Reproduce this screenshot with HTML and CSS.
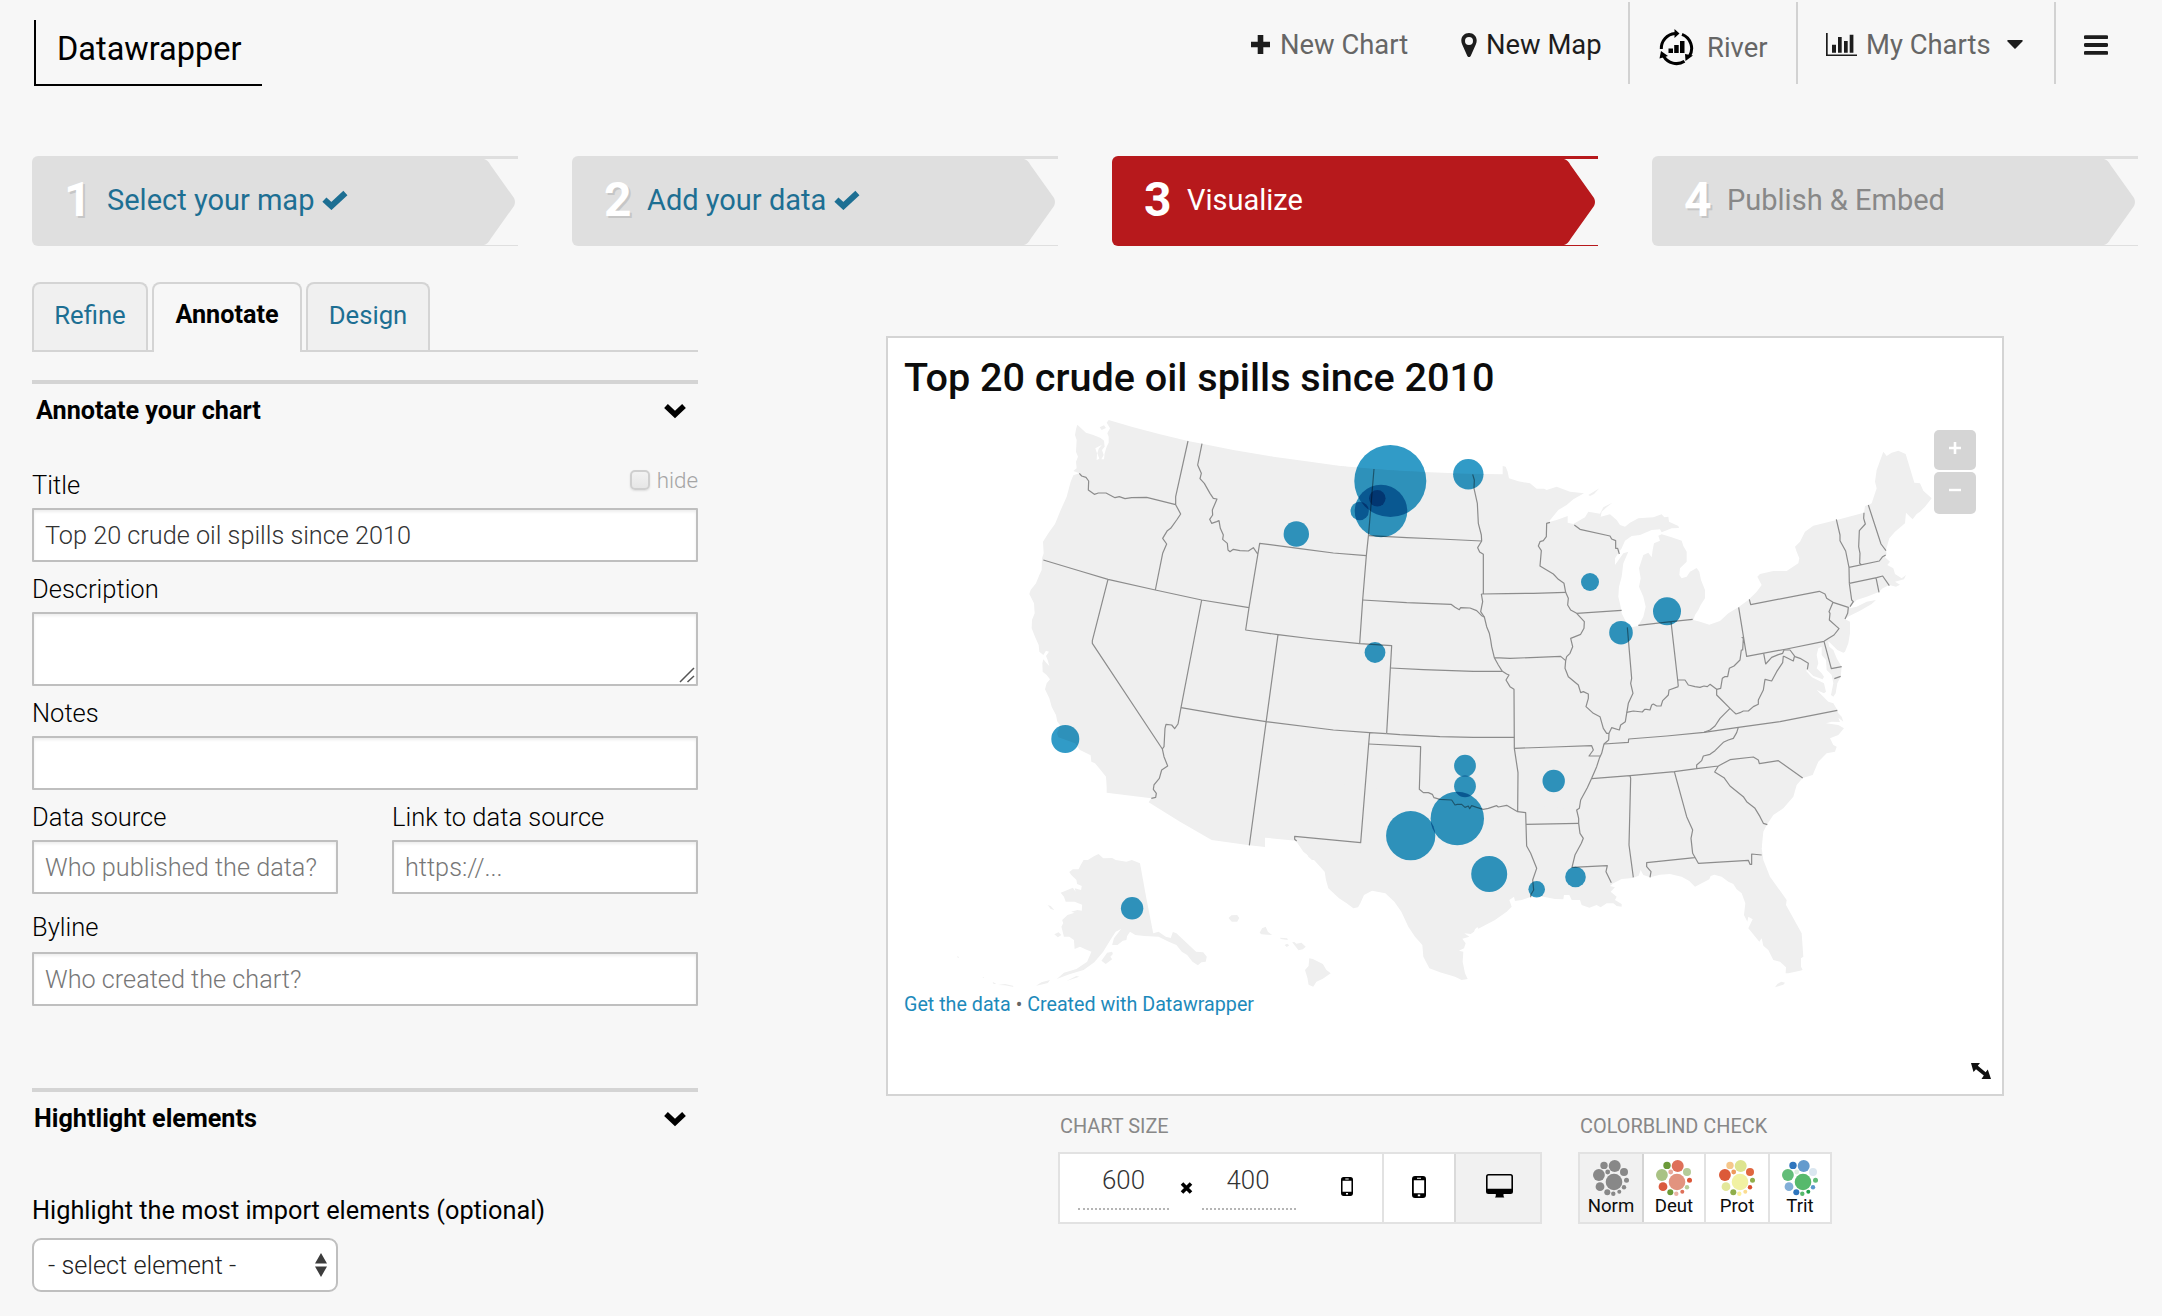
FILE: index.html
```html
<!DOCTYPE html>
<html lang="en">
<head>
<meta charset="utf-8">
<title>Datawrapper</title>
<link rel="stylesheet" href="styles.css">
</head>
<body>
<svg class="defs" aria-hidden="true">
  <symbol id="chevron" viewBox="0 0 24 16"><path d="M3 3 L12 11.5 L21 3" fill="none" stroke="#000" stroke-width="5.4"/></symbol>
  <symbol id="check" viewBox="0 0 26 20"><path d="M2.4 9.6 L9.4 16 L23.4 3" fill="none" stroke="currentColor" stroke-width="6"/></symbol>
  <symbol id="notch" viewBox="0 0 34 90"><path d="M0 3 Q4 4 6.5 9 L30 42 Q32 46 30 50 L6.5 83 Q4 88 0 89 H34 V3 Z" fill="#f7f7f7"/></symbol>
  <symbol id="dots" viewBox="0 0 36 36">
    <circle class="d1" cx="21" cy="22" r="8.3"/><circle class="d2" cx="21.7" cy="6" r="6"/><circle class="d3" cx="11" cy="5.4" r="3.7"/>
    <circle class="d4" cx="5.9" cy="15" r="5.9"/><circle class="d5" cx="14.7" cy="12" r="2.4"/><circle class="d6" cx="31" cy="12" r="4"/>
    <circle class="d7" cx="33.5" cy="20.3" r="2.5"/><circle class="d8" cx="31" cy="27.3" r="2.2"/><circle class="d9" cx="26.3" cy="31.7" r="2"/>
    <circle class="d10" cx="20.3" cy="33.7" r="2.2"/><circle class="d11" cx="14.3" cy="32.3" r="3"/><circle class="d12" cx="7" cy="26.7" r="4.4"/>
  </symbol>
</svg>

<header class="topbar">
  <a class="logo">Datawrapper</a>
  <nav class="nav">
    <a class="nav-item nav-new-chart"><svg class="icon-plus" viewBox="0 0 21 21"><path d="M10.5 1v19M1 10.5h19" stroke="#1d1d1d" stroke-width="5.6" stroke-linecap="butt"/></svg>New Chart</a>
    <a class="nav-item nav-new-map"><svg class="icon-pin" viewBox="0 0 16 24"><path fill-rule="evenodd" fill="#1d1d1d" d="M8 0C3.500 0 .3 3.300.3 7.600c0 1.500.3 2.600.9 3.900l5 11.300c.7 1.600 2.900 1.600 3.600 0l5-11.300c.6-1.300.9-2.400.9-3.900C15.700 3.300 12.500 0 8 0zM8 4a4 4 0 1 1 0 8a4 4 0 1 1 0-8z"/></svg>New Map</a>
    <a class="nav-item nav-river"><svg class="icon-river" viewBox="0 0 35 37"><g fill="none" stroke="#000" stroke-width="3"><path d="M2.300 20A15 15 0 0 1 16 4.500"/><path d="M23 5.300A15 15 0 0 1 30.500 27"/><path d="M25.500 32.300A15 15 0 0 1 4.500 27"/></g><path d="M15.500 0l5 4.500-5 4.500zM26 25l8 1.500-7.500 5.500zM.5 29.500L2 22l7 5zM9.500 19.500h4.500v4.500h-4.500zM15.200 16h4.500v8h-4.500zM21 12h4.500v12H21z"/></svg>River</a>
    <a class="nav-item nav-charts"><svg class="icon-bars" viewBox="0 0 31 24"><path fill="#1d1d1d" d="M0 0h1.700v21.500H31V23H0zM6 11.700h4v8H6zM12 4h3.700v15.700H12zM18 8h3.700v11.700H18zM23.700 1.700h3.700v18h-3.700z"/></svg>My Charts<svg class="icon-caret" viewBox="0 0 16 9"><path d="M1 0h14q1.200.4.4 1.400L8.600 8.600q-.6.500-1.200 0L.6 1.400Q-.2.400 1 0z" fill="#1d1d1d"/></svg></a>
    <a class="nav-item nav-menu"><svg class="icon-menu" viewBox="0 0 24 20"><path d="M1.500 2.200h21M1.500 10h21M1.500 17.800h21" stroke="#1d1d1d" stroke-width="3.800" stroke-linecap="round"/></svg></a>
  </nav>
</header>

<ol class="steps">
  <li class="step done"><b>1</b>Select your map<svg class="icon-check"><use href="#check"/></svg><svg class="notch"><use href="#notch"/></svg></li>
  <li class="step done"><b>2</b>Add your data<svg class="icon-check"><use href="#check"/></svg><svg class="notch"><use href="#notch"/></svg></li>
  <li class="step active"><b>3</b>Visualize<svg class="notch"><use href="#notch"/></svg></li>
  <li class="step"><b>4</b>Publish &amp; Embed<svg class="notch"><use href="#notch"/></svg></li>
</ol>

<main class="editor">
  <section class="panel">
    <div class="tabs">
      <a class="tab tab-refine">Refine</a><a class="tab tab-annotate current">Annotate</a><a class="tab tab-design">Design</a>
    </div>

    <h3 class="section-head">Annotate your chart<svg class="chevron"><use href="#chevron"/></svg></h3>
    <div class="field first">
      <div class="label-row"><label>Title</label><span class="hide-opt"><i class="checkbox"></i>hide</span></div>
      <input type="text" value="Top 20 crude oil spills since 2010">
    </div>
    <div class="field">
      <label>Description</label>
      <div class="area"><textarea></textarea><svg class="grip" viewBox="0 0 16 16"><path d="M1 15L15 1M8.500 15L15 9" stroke="#555" stroke-width="1.500"/></svg></div>
    </div>
    <div class="field"><label>Notes</label><input type="text"></div>
    <div class="pair">
      <div class="field"><label>Data source</label><input type="text" placeholder="Who published the data?"></div>
      <div class="field"><label>Link to data source</label><input type="text" placeholder="https://..."></div>
    </div>
    <div class="field byline"><label>Byline</label><input type="text" placeholder="Who created the chart?"></div>

    <h3 class="section-head second">Hightlight elements<svg class="chevron"><use href="#chevron"/></svg></h3>
    <label class="select-label">Highlight the most import elements (optional)</label>
    <div class="select">- select element -<svg class="updown" viewBox="0 0 12 24"><path d="M6 0l6 10.500H0zM6 24l6-10.500H0z" fill="#3c3c3c"/></svg></div>
  </section>

  <section class="preview">
    <div class="card">
      <h1>Top 20 crude oil spills since 2010</h1>
      <svg class="map" viewBox="904 408 1080 582">
        <g class="land">
          <!-- western states -->
          <g transform="translate(1000 400) scale(.33333)">
            <path d="M228 88 232 74 240 82 258 98 280 105 302 114 312 122 314 140 306 150 311 165 304 178 312 178 314 160 320 140 326 128 326 110 322 100 330 85 320 68 326 60 400 82 480 103 564 123 606 131 700 150 820 170 930 185 1070 205 1280 217V1380H936L925 1370 915 1350 903 1340 888 1322 795 1313 795 1341 748 1336 635 1320 540 1265 446 1207 454 1195 320 1178 320 1160 318 1130 300 1108 285 1090 274 1085 272 1066 240 1050 225 1030 175 1012 171 1000 180 975 172 965 168 945 155 920 148 895 135 868 140 850 150 838 140 825 128 815 127 790 130 778 140 790 148 798 143 780 138 768 147 755 138 752 130 765 118 755 116 735 105 710 95 685 96 660 104 640 102 610 88 582 92 570 108 550 118 525 125 510 126 475 131 460 129 425 145 400 165 372 180 335 200 290 212 245 220 226 238 220 220 213 230 205 228 185 234 170 228 155 230 120 225 105Z"/>
            <path d="M299 82 312 76 318 84 305 90Z"/>
            <path class="water" d="M286 145 306 134 296 146 292 160 298 176 290 180 291 160Z"/>
          </g>
          <!-- central and eastern states -->
          <g transform="translate(1600 420) scale(.33333)">
            <path d="M-800 137-780 138-600 153-400 161-292 163-292 138-283 140-277 155-273 175-245 184-210 190-190 206-168 206-160 210-130 200-90 215-48 220-80 238-100 255-125 270-155 307-130 300-97 288-97 308-80 312-45 292-35 275 0 281 10 262 37 248 20 262 5 275 2 290 30 283 50 300 60 315 75 320 90 308 115 295 160 292 185 283 193 292 205 290 207 305 235 318 237 324 215 325 185 337 180 328 155 330 120 345 95 348 75 362 65 385 45 415 45 435 70 400 85 395 70 430 65 470 57 500 55 530 62 560 65 580 80 610 95 622 115 617 130 590 137 560 130 530 117 500 122 475 117 445 125 420 130 405 145 398 155 412 158 390 162 370 180 362 175 347 185 343 215 352 245 362 250 378 260 395 260 425 240 445 238 465 245 475 260 470 270 455 290 444 298 455 303 480 315 510 315 535 302 555 295 570 285 585 280 600 300 605 328 614 360 603 385 580 415 562 445 540 470 515 485 495 472 470 480 462 520 453 560 453 595 430 598 415 590 395 585 380 600 365 615 335 640 317 710 300 792 278 795 258 805 255 815 250 830 205 825 185 830 150 850 95 860 108 875 98 895 92 917 102 930 145 943 188 960 190 970 212 995 235 975 260 960 275 950 282 938 298 930 290 918 278 915 310 885 335 868 355 858 390 860 402 855 412 870 425 862 435 880 445 885 462 905 475 918 465 912 478 885 485 900 494 888 500 868 495 848 505 835 517 800 530 770 540 755 556 750 565 770 560 800 545 828 540 815 552 780 572 748 588 735 597 740 600 750 605 750 640 745 670 735 695 730 698 712 690 690 668 684 664 688 680 700 690 710 715 725 740 722 770 712 790 707 820 700 830 693 825 700 790 695 765 680 750 678 720 665 705 665 680 655 685 650 705 655 730 650 745 665 760 672 770 668 778 640 768 622 750 618 752 636 772 672 790 678 815 672 820 650 810 685 845 700 850 712 870 715 880 725 890 730 905 715 893 720 906 695 905 678 910 715 915 732 925 715 945 690 955 700 975 710 980 705 995 680 1000 655 1025 638 1065 608 1074 590 1095 580 1130 550 1165 520 1185 500 1215 490 1235 485 1285H-800Z"/>
            <path d="M-35 225-2 205-18 222-30 228Z"/>
          </g>
          <!-- gulf coast, texas and florida -->
          <g transform="translate(1400 780) scale(.33333)">
            <path d="M-312 183-290 215-258 240-226 275-222 300-215 325-183 355-160 370-140 385-126 382-119 370-108 345-84 332-44 340-17 365 4 395 25 440 45 470 67 495 70 530 88 565 120 577 165 590 185 600 203 597 195 580 188 545 190 515 177 512 192 505 197 490 187 476 208 470 193 460 212 462 222 455 225 448 232 441 235 446 285 420 320 395 335 380 328 360 342 350 345 363 365 360 400 348 430 350 465 357 490 358 492 345 508 345 515 360 540 360 545 375 568 383 590 375 602 382 620 370 640 370 650 378 665 380 665 372 645 360 650 350 632 335 645 322 630 318 640 310 665 297 698 294 716 287 722 270 730 285 750 292 780 284 810 282 845 290 868 303 885 320 928 298 932 288 943 284 965 290 985 305 1000 312 1010 328 1025 340 1036 370 1032 405 1042 425 1045 410 1058 418 1045 445 1078 485 1085 475 1090 497 1105 510 1120 540 1140 545 1158 562 1157 580 1165 580 1200 572 1208 570 1203 560 1203 535 1210 530 1205 460 1158 375 1160 360 1110 290 1090 240 1085 205V150L-300 0Z"/>
            <path d="M1125 622 1132 612 1144 605 1155 608 1150 614Z"/>
          </g>
          <!-- alaska and hawaii -->
          <g transform="translate(880 780) scale(.35714 .33333)">
            <path d="M570 240 582 240 600 228 612 222 625 235 650 234 660 240 690 245 705 240 728 250 745 350 765 460 780 455 800 470 814 474 820 456 830 460 850 480 885 515 905 517 915 530 912 545 900 547 890 556 875 545 860 525 845 515 830 495 810 486 780 470 740 468 715 465 700 455 692 468 690 480 680 482 665 495 650 495 655 475 675 447 660 455 645 480 625 515 600 547 570 570 530 583 495 597 515 578 550 567 580 545 592 515 575 508 560 500 545 507 543 480 530 470 515 470 508 440 513 430 510 420 525 405 545 398 535 395 553 390 565 392 566 374 545 365 520 365 515 350 506 338 540 323 548 335 545 325 563 330 565 318 552 312 550 300 535 284 530 276 540 268 556 268 562 255Z"/>
            <path d="M460 372 478 378 488 390 478 387 470 376ZM488 463 500 457 508 465 498 472ZM620 542 636 518 650 515 652 522 645 530 650 538 632 552ZM437 617 452 607 476 600 470 609 450 614ZM522 603 550 588 558 590ZM315 605 326 612 318 612ZM330 615 350 612 372 617 374 621 350 616ZM216 528 222 532 218 534ZM288 590 292 592 288 594Z"/>
            <path d="M976 414 984 406 1000 405 1006 414 1000 425 985 425ZM1063 458 1070 445 1080 440 1086 455 1098 465 1085 464 1068 463ZM1120 473 1140 475 1142 480 1122 477ZM1133 495 1140 491 1146 496 1139 501ZM1154 487 1160 486 1166 491 1180 488 1192 500 1184 508 1172 511ZM1190 570 1200 558 1202 535 1212 537 1240 552 1250 570 1262 580 1240 596 1222 605 1213 620 1200 614 1197 595Z"/>
          </g>
        </g>
        <g class="borders">
          <g transform="translate(1000 400) scale(.33333)">
            <path d="M238 220 245 228 258 232 266 243 265 270 283 283 295 279 318 279 345 293 358 290 375 296 395 293 440 292 527 314M564 123 527 290 527 314 542 342 530 360 512 385 502 392 488 415 500 432 488 460 466 570M130 480 240 513 324 538 466 570 605 600 747 623M324 538 277 722 277 730 487 1047M605 600 543 923 534 972 524 986 515 975 498 973 495 985 492 1040 487 1047 492 1070 503 1098 485 1110 478 1135 462 1155 460 1168 469 1180 467 1192 454 1195"/>
            <path d="M606 131 593 195 604 220 600 236 613 250 630 280 640 295 651 297 637 330 638 345 629 358 635 370 650 365 657 362 661 385 670 405 668 418 682 430 684 450 690 455 700 448 720 452 745 453 760 443 773 462M747 623 779 430 900 446 1000 459 1099 467M747 623 737 690 834 704 940 717 1079 731 1175 737 1160 1000M1122 207 1106 400 1099 467 1088 600 1079 731M834 704 748 1336M543 923 700 950 798 965 1000 990 1109 998 1160 1001M1109 998 1106 1032 1082 1328 884 1309 884 1318 890 1323"/>
          </g>
          <g transform="translate(1340 420) scale(.33333)">
            <path d="M86 347 200 353 300 357 425 363M68 540 200 548 333 553 345 562 358 569 362 563 390 564 410 572 425 587 433 591M140 941 180 944 300 950 400 952 523 952M86 972 242 980 238 1108 250 1118 265 1118 277 1123 282 1133 300 1138 335 1140 345 1155 352 1153 365 1153 375 1162 385 1158 389 1166 395 1157 410 1162 430 1168 445 1165 470 1157 475 1161 500 1156 515 1165 533 1175 557 1178 558 1213 560 1278 572 1300 590 1345 578 1380 581 1410 572 1425 572 1432M152 744 250 749 400 754 487 754"/>
            <path d="M398 163 403 180 402 205 412 250 415 310 424 345 425 363 413 383 419 396 430 403 430 522M424 522 500 521 580 520 677 517M424 522 428 545 422 575 433 591 440 620 448 640 452 660 455 680 463 713 475 735 487 754 500 762 507 765 498 780 510 800 522 808 523 985 534 1058 533 1175M463 713 510 715 590 712 662 709 677 722M523 985 640 981 755 977 760 990 747 1008 780 1008M558 1213 716 1210"/>
            <path d="M630 307 620 310 619 350 610 362 600 365 595 378 604 392 600 438 620 450 640 462 655 478 672 490 677 517 685 535 683 555 692 570 710 580 733 605 732 625 722 643 692 655 698 680 690 700 680 710 677 722 675 745 685 770 715 795 722 818 730 815 745 822 745 835 738 860 760 880 780 890 790 925 800 940 807 940 806 960 792 972 785 1000 778 1015 770 1040 755 1075 742 1103 722 1140 718 1165 710 1170 716 1195 716 1210 720 1240 730 1255 724 1270 705 1305 696 1342 802 1337 798 1355 814 1388M703 315 720 328 810 348 815 357 827 362 827 385 833 385 838 402M710 580 845 571M862 622 875 775 872 790 879 820 865 850 860 880 856 905 842 915 838 930 815 923 807 940"/>
          </g>
          <g transform="translate(1600 420) scale(.33333)">
            <path d="M115 616 213 605 278 598M213 605 233 780 235 800M80 877 100 873 127 876 134 868 140 868 150 870 155 855 160 852 170 858 183 858 188 842 205 825 207 810 235 800M233 780 255 780 265 795 285 800 300 802 312 798 322 800 330 793 350 808 362 805 367 775 374 770 383 770 388 745 402 738 420 720 424 690 428 690 430 655 425 652M416 562 440 709 560 687 672 664 686 655 702 645 717 626 688 600 690 580 687 575 699 547 680 535 675 522 658 514 452 554 448 538M699 547 745 562 743 580 735 597M748 490 755 540 760 545 750 560"/>
            <path d="M709 298 720 345 720 362 737 393 747 442 748 490M747 442 838 423 848 410 857 405M748 490 830 473 848 468 868 497M828 473 837 517M792 278 791 295 796 312 778 332 776 380 780 400 779 430 784 434M805 255 843 372 858 392M672 664 694 746 725 740M703 776 722 769M491 700 497 732 515 712 535 704 548 700 552 690 570 690 585 710 600 715 625 730 622 748M550 708 580 723 583 710M550 708 548 728 530 755 515 783 495 778 490 810 475 840 475 853 460 860 445 873 430 873 420 878 408 882 400 875 390 865 365 840 350 825 350 808M390 865 360 895 345 918 330 930 312 937"/>
            <path d="M12 972 85 967 86 957 200 948 312 937 415 922 540 905 712 871M415 922 410 938 400 955 385 960 370 967 345 992 330 1003 310 1008 305 1022 290 1035 290 1046M-25 1076 90 1067 223 1055 290 1046 355 1038 390 1019 460 1011 475 1020 478 1031 535 1022 608 1074M355 1038 344 1056 372 1073 390 1098 430 1130 440 1145 465 1165 480 1190 490 1210 502 1214M90 1067 92 1075 87 1275 100 1372M223 1055 260 1190 278 1230 273 1255 278 1300 295 1330 445 1321 450 1333 455 1333 455 1302 485 1305M284 1313 140 1328 140 1340 153 1355 150 1372"/>
          </g>
        </g>
        <g class="spills">
          <circle cx="1390.300" cy="481" r="36"/><circle cx="1381" cy="511" r="26.300"/><circle cx="1359.700" cy="511" r="9.200"/><circle cx="1377.300" cy="498.300" r="8.300"/>
          <circle cx="1468.300" cy="474.300" r="15.200"/><circle cx="1296.300" cy="534" r="12.700"/><circle cx="1590" cy="582" r="9"/><circle cx="1621" cy="632.700" r="11.800"/>
          <circle cx="1667" cy="611.300" r="14"/><circle cx="1375" cy="652.500" r="10.400"/><circle cx="1065.300" cy="739" r="14"/><circle cx="1465" cy="765.700" r="10.900"/>
          <circle cx="1465" cy="786.300" r="10.900"/><circle cx="1457.300" cy="818.500" r="26.700"/><circle cx="1410.700" cy="835.700" r="24.600"/><circle cx="1553.700" cy="781" r="11.200"/>
          <circle cx="1489.200" cy="874" r="18"/><circle cx="1536.700" cy="889.300" r="8.300"/><circle cx="1575.500" cy="877" r="10.300"/><circle cx="1132.100" cy="908.300" r="11.200"/>
        </g>
      </svg>
      <p class="source"><a>Get the data</a> • <a>Created with Datawrapper</a></p>
      <div class="zoom">
        <span class="zoom-in"><svg viewBox="0 0 12 12"><path d="M6 0v12M0 6h12" stroke="#fff" stroke-width="2.600"/></svg></span>
        <span class="zoom-out"><svg viewBox="0 0 12 12"><path d="M0 6h12" stroke="#fff" stroke-width="2.400"/></svg></span>
      </div>
      <svg class="resize" viewBox="0 0 20 16"><path d="M0 0H9L6.800 2.800 14.600 9.200 16.800 6.500 20 16H10.500L12.800 12.400 5 6.200 2.500 9Z" fill="#111"/></svg>
    </div>

    <div class="controls">
      <div class="size">
        <h4>CHART SIZE</h4>
        <div class="box">
          <div class="dims">
            <span class="num num-w">600</span>
            <svg class="times" viewBox="0 0 13 12"><path d="M2 1.500L11 10.500M11 1.500L2 10.500" stroke="#000" stroke-width="3.600"/></svg>
            <span class="num num-h">400</span>
            <svg class="phone-s" viewBox="0 0 14 22"><path fill-rule="evenodd" d="M3 0h8a3 3 0 0 1 3 3v16a3 3 0 0 1-3 3H3a3 3 0 0 1-3-3V3a3 3 0 0 1 3-3zM1.800 4.200v13h10.400v-13zM5 1.800v.9h4v-.9zM5.800 18.600v1.600h2.400v-1.600z"/></svg>
          </div>
          <div class="cell cell-phone"><svg class="phone-l" viewBox="0 0 14 22"><path fill-rule="evenodd" d="M3 0h8a3 3 0 0 1 3 3v16a3 3 0 0 1-3 3H3a3 3 0 0 1-3-3V3a3 3 0 0 1 3-3zM1.800 4.200v13h10.400v-13zM5 1.800v.9h4v-.9zM5.800 18.600v1.600h2.400v-1.600z"/></svg></div>
          <div class="cell cell-desktop"><svg class="desktop" viewBox="0 0 27 24"><path fill-rule="evenodd" d="M2.500 0h22A2.500 2.500 0 0 1 27 2.500v15a2.500 2.500 0 0 1-2.500 2.500H17.500v2l.8 1.500H9l.8-1.500v-2H2.500A2.500 2.500 0 0 1 0 17.500v-15A2.500 2.500 0 0 1 2.500 0zM1.600 2.600v12.200h23.800V2.600Q25.400 1.600 24.400 1.600H2.600Q1.600 1.600 1.600 2.600z"/></svg></div>
        </div>
      </div>
      <div class="blind">
        <h4>COLORBLIND CHECK</h4>
        <div class="box">
          <div class="vision norm"><svg><use href="#dots"/></svg>Norm</div>
          <div class="vision deut"><svg><use href="#dots"/></svg>Deut</div>
          <div class="vision prot"><svg><use href="#dots"/></svg>Prot</div>
          <div class="vision trit"><svg><use href="#dots"/></svg>Trit</div>
        </div>
      </div>
    </div>
  </section>
</main>
</body>
</html>
```
FILE: styles.css
```css
* { box-sizing: border-box; }
body { margin: 0; width: 2162px; height: 1316px; overflow: hidden; background: #f7f7f7; font: 25.5px Roboto, sans-serif; color: #000; }
svg { display: block; flex: none; }
.defs { position: absolute; width: 0; height: 0; }

/* top bar */
.topbar { display: flex; justify-content: space-between; height: 156px; padding-left: 34px; }
.logo { width: 228px; height: 66px; margin-top: 20px; padding-left: 21px; border-left: 2px solid #000; border-bottom: 2px solid #000; font-size: 32.5px; line-height: 58px; }
.nav { display: flex; height: 82px; margin-top: 2px; font-size: 27.4px; color: #666; }
.nav-item { display: flex; align-items: center; padding-top: 3px; white-space: nowrap; }
.nav-new-chart { width: 211px; }
.nav-new-map { width: 167px; color: #1d1d1d; }
.nav-river { width: 168px; padding: 9px 0 0 29px; border-left: 2px solid #d2d2d2; }
.nav-charts { width: 258px; padding-left: 28px; border-left: 2px solid #d2d2d2; }
.nav-menu { width: 108px; padding-left: 28px; border-left: 2px solid #d2d2d2; }
.icon-plus { width: 21px; height: 21px; margin-right: 9px; }
.icon-pin { width: 16px; height: 24px; margin-right: 9px; }
.icon-river { width: 35px; height: 37px; margin-right: 13px; }
.icon-bars { width: 31px; height: 24px; margin-right: 9px; }
.icon-caret { width: 16px; height: 9px; margin-left: 16px; }
.icon-menu { width: 24px; height: 20px; }

/* workflow steps */
.steps { display: flex; gap: 54px; margin: 0; padding: 0 0 0 32px; list-style: none; }
.step { position: relative; display: flex; align-items: center; width: 486px; height: 90px; padding: 0 0 3px 32px; border-radius: 6px 0 0 6px; background: #dfdfdf; color: #888; font-size: 29px; white-space: nowrap; }
.step b { width: 43px; padding-top: 1px; font-size: 48px; line-height: 48px; color: #fff; text-shadow: 2px 2px 0 #c6c6c6; }
.step.done { color: #1d6f93; }
.step.active { background: #b7191c; color: #fff; }
.step.active b { text-shadow: none; }
.icon-check { width: 26px; height: 20px; margin-left: 8px; }
.notch { position: absolute; top: 0; right: 0; width: 34px; height: 90px; }

/* left panel */
.editor { display: flex; gap: 188px; padding: 36px 0 0 32px; }
.panel { width: 666px; }
.tabs { display: flex; gap: 4px; height: 70px; border-bottom: 2px solid #d4d4d4; }
.tab { height: 68px; border: 2px solid #d4d4d4; border-bottom: 0; border-radius: 8px 8px 0 0; background: #f0f0f0; color: #1d6f93; font-size: 25.7px; line-height: 62px; text-align: center; }
.tab-refine { width: 116px; }
.tab-annotate { width: 150px; }
.tab-design { width: 124px; }
.tab.current { height: 70px; background: #f7f7f7; color: #000; font-size: 25.2px; font-weight: 700; }
.section-head { display: flex; align-items: center; justify-content: space-between; height: 58px; margin: 28px 0 0; padding: 0 11px 0 4px; border-top: 4px solid #d4d4d4; font-size: 25.2px; line-height: 54px; font-weight: 700; }
.section-head.second { margin-top: 82px; padding-left: 2px; }
.chevron { width: 24px; height: 16px; }
label { display: block; line-height: 36px; font-weight: 300; }
.field { margin-top: 9px; }
.field.first { margin-top: 29px; }
.field.byline { margin-top: 15px; }
.label-row { display: flex; justify-content: space-between; align-items: flex-start; }
.hide-opt { display: flex; font-size: 22.4px; line-height: 27px; font-weight: 300; color: #a5a5a5; }
.checkbox { width: 20px; height: 20px; margin: 3px 7px 0 0; border: 2px solid #cfcfcf; border-radius: 5px; background: linear-gradient(#f2f2f2, #e6e6e6); box-shadow: 0 1px 2px #ddd; }
input, textarea { display: block; width: 100%; height: 54px; margin: 5px 0 0; padding: 0 11px; border: 2px solid #bfbfbf; border-radius: 1px; background: #fff; box-shadow: inset 0 2px 3px #00000012; outline: 0; font: 300 25.25px Roboto, sans-serif; color: #333; }
.byline input { margin-top: 7px; }
input::placeholder { color: #777; opacity: 1; }
.area { position: relative; }
textarea { height: 74px; resize: none; }
.grip { position: absolute; right: 3px; bottom: 3px; width: 16px; height: 16px; }
.pair { display: flex; gap: 54px; }
.pair .field { flex: 1; }
.select-label { margin: 47px 0 9px; font-size: 25.3px; font-weight: 400; }
.select { display: flex; align-items: center; justify-content: space-between; width: 306px; height: 54px; padding: 0 9px 0 14px; border: 2px solid #bfbfbf; border-radius: 9px; background: #fff; font-size: 25.3px; font-weight: 300; color: #222; }
.updown { width: 12px; height: 24px; margin-bottom: 1px; }

/* chart preview */
.preview { width: 1118px; padding-top: 54px; }
.card { position: relative; height: 760px; padding: 10px 16px 0; border: 2px solid #d4d4d4; background: #fff; }
.card h1 { margin: 0; font-size: 39.6px; line-height: 60px; font-weight: 500; color: #0c0c0c; white-space: nowrap; }
.map { width: 1080px; height: 582px; isolation: isolate; }
.land { fill: #efefef; }
.water { fill: #fff; }
.borders { fill: none; stroke: #8c8c8c; stroke-width: 3.6; stroke-linejoin: round; }
.spills circle { fill: #319bc7; mix-blend-mode: multiply; }
.source { margin: 0; font-size: 19.7px; line-height: 30px; color: #666; }
.source a { color: #1d8abb; }
.zoom { position: absolute; left: 1046px; top: 92px; display: grid; gap: 2px; }
.zoom span { display: grid; justify-content: center; width: 42px; border-radius: 5px; background: #d5d5d5; }
.zoom svg { width: 12px; height: 12px; margin-top: 12px; }
.zoom-in { height: 40px; }
.zoom-out { height: 42px; }
.resize { position: absolute; left: 1083px; top: 725px; width: 20px; height: 16px; }

/* controls under the chart */
.controls { display: flex; gap: 36px; padding: 16px 0 0 172px; }
.controls h4 { margin: 0 0 10px; padding-left: 2px; font-size: 19.9px; line-height: 30px; font-weight: 400; color: #888; white-space: nowrap; }
.box { display: flex; height: 72px; border: 2px solid #e2e2e2; background: #fff; }
.size { width: 484px; }
.blind { width: 254px; }
.dims { display: flex; width: 322px; padding-left: 18px; }
.num { height: 56px; border-bottom: 2px dotted #b5b5b5; font-size: 25.8px; line-height: 53px; font-weight: 300; color: #333; text-align: center; }
.num-w { width: 91px; }
.num-h { width: 94px; padding-right: 2px; }
.times { width: 13px; height: 12px; margin: 28px 9px 0 11px; }
.phone-s { width: 12px; height: 19px; margin: 23px 0 0 45px; }
.cell { display: flex; justify-content: center; border-left: 2px solid #e2e2e2; }
.cell-phone { width: 72px; }
.cell-desktop { flex: 1; background: #f1f1f1; border-color: #dadada; }
.phone-l { width: 14px; height: 22px; margin-top: 22px; }
.desktop { width: 27px; height: 24px; margin: 20px 0 0 2px; }
.vision { display: flex; flex-direction: column; align-items: center; width: 64px; padding-top: 6px; border-right: 2px solid #e2e2e2; font-size: 18.6px; line-height: 20px; color: #0c0c0c; }
.vision svg { width: 36px; height: 36px; }
.vision.deut { width: 62px; }
.vision.trit { width: 60px; border-right: 0; }
.d1 { fill: var(--c1); } .d2 { fill: var(--c2); } .d3 { fill: var(--c3); } .d4 { fill: var(--c4); }
.d5 { fill: var(--c5); } .d6 { fill: var(--c6); } .d7 { fill: var(--c7); } .d8 { fill: var(--c8); }
.d9 { fill: var(--c9); } .d10 { fill: var(--c10); } .d11 { fill: var(--c11); } .d12 { fill: var(--c12); }
.norm { --c1: #888; --c2: #888; --c3: #888; --c4: #888; --c5: #888; --c6: #888; --c7: #888; --c8: #888; --c9: #888; --c10: #888; --c11: #888; --c12: #888; background: #f1f1f1; border-color: #d4d4d4; }
.deut { --c1: #e2937f; --c2: #de7059; --c3: #6b9a38; --c4: #a9c284; --c5: #e8a99b; --c6: #b5cb98; --c7: #db5638; --c8: #b5cb98; --c9: #de7059; --c10: #eab3a6; --c11: #6b9a38; --c12: #da5a3d; }
.prot { --c1: #f1f1a2; --c2: #dde48f; --c3: #f6c78a; --c4: #dc5a38; --c5: #ee9a5c; --c6: #e0663f; --c7: #8fae4b; --c8: #da5030; --c9: #fbdc90; --c10: #fbf09c; --c11: #8fae4b; --c12: #e3e79a; }
.trit { --c1: #57b96c; --c2: #649bcd; --c3: #2f76be; --c4: #62bd78; --c5: #dbeee0; --c6: #dbe7f0; --c7: #62bd78; --c8: #5a98cc; --c9: #22a14b; --c10: #57b96c; --c11: #2f76be; --c12: #82aed7; }
```
